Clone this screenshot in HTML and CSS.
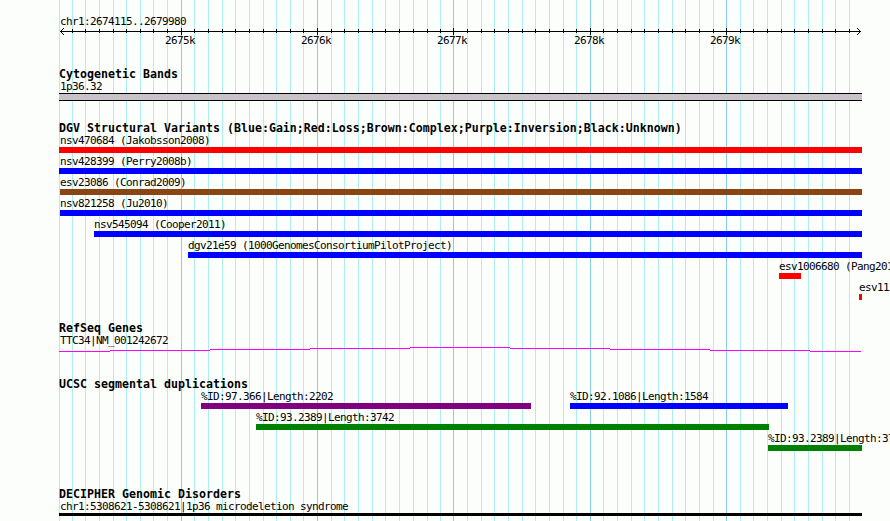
FILE: index.html
```
<!DOCTYPE html>
<html lang="en">
<head>
    <meta charset="UTF-8">
    <title>chr1:2674115..2679980</title>
    <link rel="stylesheet" href="styles.css">
</head>
<body>

<!-- Grid lines behind all tracks -->
<svg class="grid" width="890" height="521" shape-rendering="crispEdges">
    <path class="minor" id="grid-minor"/>
    <path class="major" id="grid-major"/>
</svg>

<main class="browser">
    <!-- Ruler -->
    <div class="region">chr1:2674115..2679980</div>
    <svg class="ruler" width="890" height="20" shape-rendering="crispEdges">
        <path d="M60 5.5H861"/>
        <path id="ruler-ticks"/>
        <path class="arrow" d="M60 5h1v1h-1zM61 4h1v1h-1zM62 3h1v1h-1zM63 2h1v1h-1zM61 6h1v1h-1zM62 7h1v1h-1zM63 8h1v1h-1zM860 5h1v1h-1zM859 4h1v1h-1zM858 3h1v1h-1zM857 2h1v1h-1zM859 6h1v1h-1zM858 7h1v1h-1zM857 8h1v1h-1z"/>
        <text x="165" y="18">2675k</text>
        <text x="301" y="18">2676k</text>
        <text x="437" y="18">2677k</text>
        <text x="574" y="18">2678k</text>
        <text x="710" y="18">2679k</text>
    </svg>

    <section class="track cytoband">
        <h2>Cytogenetic Bands</h2>
        <div class="row">
            <div class="feature" style="margin-left: 59px; width: 803px"><span class="label inset">1p36.32</span><div class="band"></div></div>
        </div>
    </section>

    <section class="track variants">
        <h2>DGV Structural Variants (Blue:Gain;Red:Loss;Brown:Complex;Purple:Inversion;Black:Unknown)</h2>
        <div class="row">
            <div class="feature" style="margin-left: 59px; width: 803px"><span class="label inset">nsv470684 (Jakobsson2008)</span><div class="bar red"></div></div>
        </div>
        <div class="row">
            <div class="feature" style="margin-left: 59px; width: 803px"><span class="label inset">nsv428399 (Perry2008b)</span><div class="bar blue"></div></div>
        </div>
        <div class="row">
            <div class="feature" style="margin-left: 60px; width: 802px"><span class="label">esv23086 (Conrad2009)</span><div class="bar brown"></div></div>
        </div>
        <div class="row">
            <div class="feature" style="margin-left: 60px; width: 802px"><span class="label">nsv821258 (Ju2010)</span><div class="bar blue"></div></div>
        </div>
        <div class="row">
            <div class="feature" style="margin-left: 94px; width: 768px"><span class="label">nsv545094 (Cooper2011)</span><div class="bar blue"></div></div>
        </div>
        <div class="row">
            <div class="feature" style="margin-left: 188px; width: 674px"><span class="label">dgv21e59 (1000GenomesConsortiumPilotProject)</span><div class="bar blue"></div></div>
        </div>
        <div class="row">
            <div class="feature" style="margin-left: 779px; width: 22px"><span class="label">esv1006680 (Pang2010)</span><div class="bar red"></div></div>
        </div>
        <div class="row">
            <div class="feature" style="margin-left: 859px; width: 3px"><span class="label">esv112</span><div class="bar red"></div></div>
        </div>
    </section>

    <section class="track genes">
        <h2>RefSeq Genes</h2>
        <div class="row">
            <div class="feature" style="margin-left: 59px; width: 803px">
                <span class="label inset">TTC34|NM_001242672</span>
                <svg class="intron" width="803" height="5" shape-rendering="crispEdges">
                    <path d="M0 4.5H51M51 3.5H151M151 2.5H251M251 1.5H351M351 .5H451M451 1.5H551M551 2.5H651M651 3.5H751M751 4.5H802"/>
                </svg>
            </div>
        </div>
    </section>

    <section class="track segdups">
        <h2>UCSC segmental duplications</h2>
        <div class="row">
            <div class="feature" style="margin-left: 201px; width: 330px"><span class="label">%ID:97.366|Length:2202</span><div class="bar purple"></div></div>
            <div class="feature" style="margin-left: 39px; width: 218px"><span class="label">%ID:92.1086|Length:1584</span><div class="bar blue"></div></div>
        </div>
        <div class="row">
            <div class="feature" style="margin-left: 256px; width: 513px"><span class="label">%ID:93.2389|Length:3742</span><div class="bar green"></div></div>
        </div>
        <div class="row">
            <div class="feature" style="margin-left: 768px; width: 94px"><span class="label">%ID:93.2389|Length:3742</span><div class="bar green"></div></div>
        </div>
    </section>

    <section class="track disorders">
        <h2>DECIPHER Genomic Disorders</h2>
        <div class="row">
            <div class="feature" style="margin-left: 59px; width: 803px"><span class="label inset">chr1:5308621-5308621|1p36 microdeletion syndrome</span><div class="bar black"></div></div>
        </div>
    </section>
</main>

<script>
    // x of every 100 bp line, with the 1 kb lines kept apart
    const minor = [59, 72, 85, 99, 113, 126, 140, 153, 167, 194, 208, 222, 235, 249, 263, 276, 290, 303,
        331, 344, 358, 372, 385, 399, 413, 427, 440, 467, 481, 494, 508, 522, 535, 549, 563, 576,
        603, 617, 631, 644, 658, 672, 685, 699, 713, 740, 753, 767, 781, 794, 808, 822, 835, 849];
    const major = [181, 317, 453, 590, 726];

    function lines(xs, top, height) {
        return xs.map(x => `M${x + 0.5} ${top}v${height}`).join('');
    }

    document.getElementById('grid-minor').setAttribute('d', lines(minor, 0, 521));
    document.getElementById('grid-major').setAttribute('d', lines(major, 0, 521));
    document.getElementById('ruler-ticks').setAttribute('d', lines(minor.slice(1), 3, 4) + lines(major, 2, 7));
</script>

</body>
</html>
```
FILE: styles.css
```
* {
    margin: 0;
    padding: 0;
    box-sizing: border-box;
}

body {
    width: 890px;
    height: 521px;
    overflow: hidden;
    position: relative;
    background: #fcfefc;
    color: #000;
    font-family: "DejaVu Sans Mono", monospace;
    font-size: 11px;
    letter-spacing: -0.62px;
}

svg {
    display: block;
    fill: none;
    stroke: #000;
}

/* Grid */
.grid {
    position: absolute;
    top: 0;
    left: 0;
}

.grid .minor {
    stroke: #afeeee;
}

.grid .major {
    stroke: #87ceeb;
}

.browser {
    position: relative;
    width: 890px;
    height: 521px;
    padding-top: 13px;
    overflow: hidden;
}

/* Ruler */
.region {
    height: 13px;
    line-height: 17px;
    padding-left: 60px;
}

.ruler text,
.ruler .arrow {
    fill: #000;
    stroke: none;
}

/* Tracks */
.track h2 {
    height: 12px;
    padding-left: 59px;
    font-size: 11.6px;
    line-height: 16px;
    letter-spacing: 0.016px;
    white-space: nowrap;
}

.row {
    display: flex;
}

.feature {
    flex: none;
}

.label {
    display: block;
    height: 15px;
    line-height: 18px;
    white-space: nowrap;
}

.inset {
    padding-left: 1px;
}

.bar {
    height: 6px;
}

.band {
    height: 8px;
    background: #c8c3c8;
    border-top: 1px solid #000;
    border-bottom: 1px solid #000;
}

.intron {
    stroke: #f0f;
}

.cytoband {
    margin-top: 20px;
}

.variants {
    margin-top: 19px;
}

.genes {
    margin-top: 20px;
}

.segdups {
    margin-top: 24px;
}

.disorders {
    margin-top: 35px;
}

.red {
    background: #f00;
}

.blue {
    background: #00f;
}

.brown {
    background: #8b4513;
}

.purple {
    background: #800080;
}

.green {
    background: #008000;
}

.black {
    height: 3px;
    background: #000;
}
```
